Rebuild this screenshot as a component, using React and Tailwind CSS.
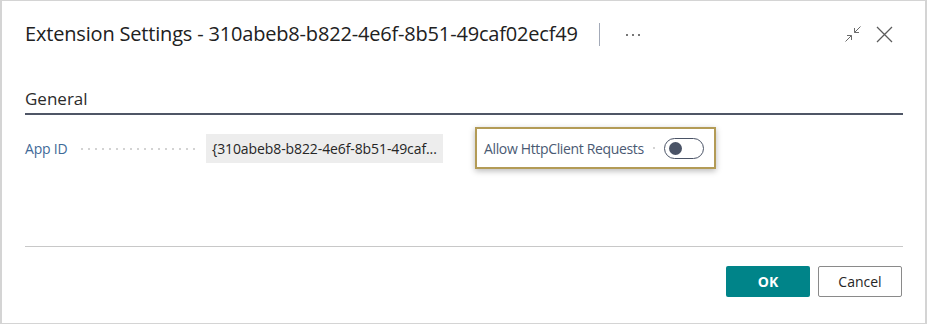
import React from "react";

function CollapseIcon() {
  return (
    <svg width="16" height="16" viewBox="0 0 16 16" fill="none" stroke="#6b6b6b" strokeWidth="1">
      <path d="M15.5 0.5 L9.5 6.5 M9.5 2 V6.5 H14" />
      <path d="M0.5 15.5 L6.5 9.5 M2 9.5 H6.5 V14" />
    </svg>
  );
}

function CloseIcon() {
  return (
    <svg width="17" height="17" viewBox="0 0 17 17" fill="none" stroke="#5c5c5c" strokeWidth="1.3">
      <path d="M1 1 L16 16 M16 1 L1 16" />
    </svg>
  );
}

export default function App() {
  const dots = Array.from({ length: 17 });
  return (
    <div
      className="w-[927px] h-[324px] bg-white border-l-2 border-r-2 border-t border-b border-[#d4d4d4] flex flex-col pl-[23px] pr-[22px] text-[#212121]"
      style={{ fontFamily: '"Segoe UI", "Open Sans", "Noto Sans", sans-serif' }}
    >
      {/* Header */}
      <div className="mt-[19px] h-[28px] flex items-center">
        <div className="text-[20px] leading-[28px] tracking-[-0.18px] text-[#212121] whitespace-nowrap">
          Extension Settings - 310abeb8-b822-4e6f-8b51-49caf02ecf49
        </div>
        <div className="ml-[21px] w-px h-[23px] bg-[#a3aab8]" />
        <div className="ml-[26px] flex items-center gap-[4px] mt-[1px]">
          <span className="w-[2px] h-[2px] bg-[#777]" />
          <span className="w-[2px] h-[2px] bg-[#777]" />
          <span className="w-[2px] h-[2px] bg-[#777]" />
        </div>
        <div className="flex-1" />
        <div className="flex items-center gap-[15px] mr-[10px]">
          <CollapseIcon />
          <CloseIcon />
        </div>
      </div>

      {/* General */}
      <div className="mt-[39px] h-[28px] border-b-2 border-[#4f5666] flex items-start">
        <div className="text-[17px] leading-[24px] font-medium text-[#2b2b2b]">General</div>
      </div>

      {/* Fields */}
      <div className="mt-[12px] h-[42px] flex items-center">
        <div className="flex items-center w-[181px]">
          <span className="text-[14px] tracking-[-0.2px] text-[#3f6a98] whitespace-nowrap">App ID</span>
          <div className="flex-1 flex justify-end gap-[5px] pr-[11px] mt-[2px]">
            {dots.map((_, i) => (
              <span key={i} className="w-[2px] h-[2px] rounded-full bg-[#c4c4c4]" />
            ))}
          </div>
        </div>
        <div className="w-[237px] h-[29px] bg-[#ededed] flex items-center pl-[6px] text-[14px] tracking-[-0.1px] text-[#262626] whitespace-nowrap overflow-hidden">
          {"{310abeb8-b822-4e6f-8b51-49caf..."}
        </div>
        <div className="ml-[32px] w-[241px] h-[42px] border-2 border-[#b39b56] shadow-[0_2px_6px_rgba(0,0,0,0.28)] flex items-center pl-[7px] pr-[10px]">
          <span className="text-[14px] tracking-[-0.35px] text-[#4a5a73] whitespace-nowrap">Allow HttpClient Requests</span>
          <div className="flex-1 flex justify-center">
            <span className="w-[2px] h-[2px] rounded-full bg-[#c4c4c4]" />
          </div>
          <div className="w-[40px] h-[21px] rounded-full border border-[#4a5366] flex items-center pl-[4px]">
            <span className="w-[13px] h-[13px] rounded-full bg-[#4a5366]" />
          </div>
        </div>
      </div>

      {/* Separator */}
      <div className="mt-[77px] h-px bg-[#c8c8c8]" />

      {/* Buttons */}
      <div className="mt-[19px] flex justify-end gap-[8px] pr-[1px]">
        <button className="w-[84px] h-[31px] bg-[#008489] text-white text-[14px] font-bold rounded-[2px]">OK</button>
        <button className="w-[84px] h-[31px] bg-white border border-[#8a8a8a] text-[#262626] text-[14px] rounded-[2px]">Cancel</button>
      </div>
    </div>
  );
}
